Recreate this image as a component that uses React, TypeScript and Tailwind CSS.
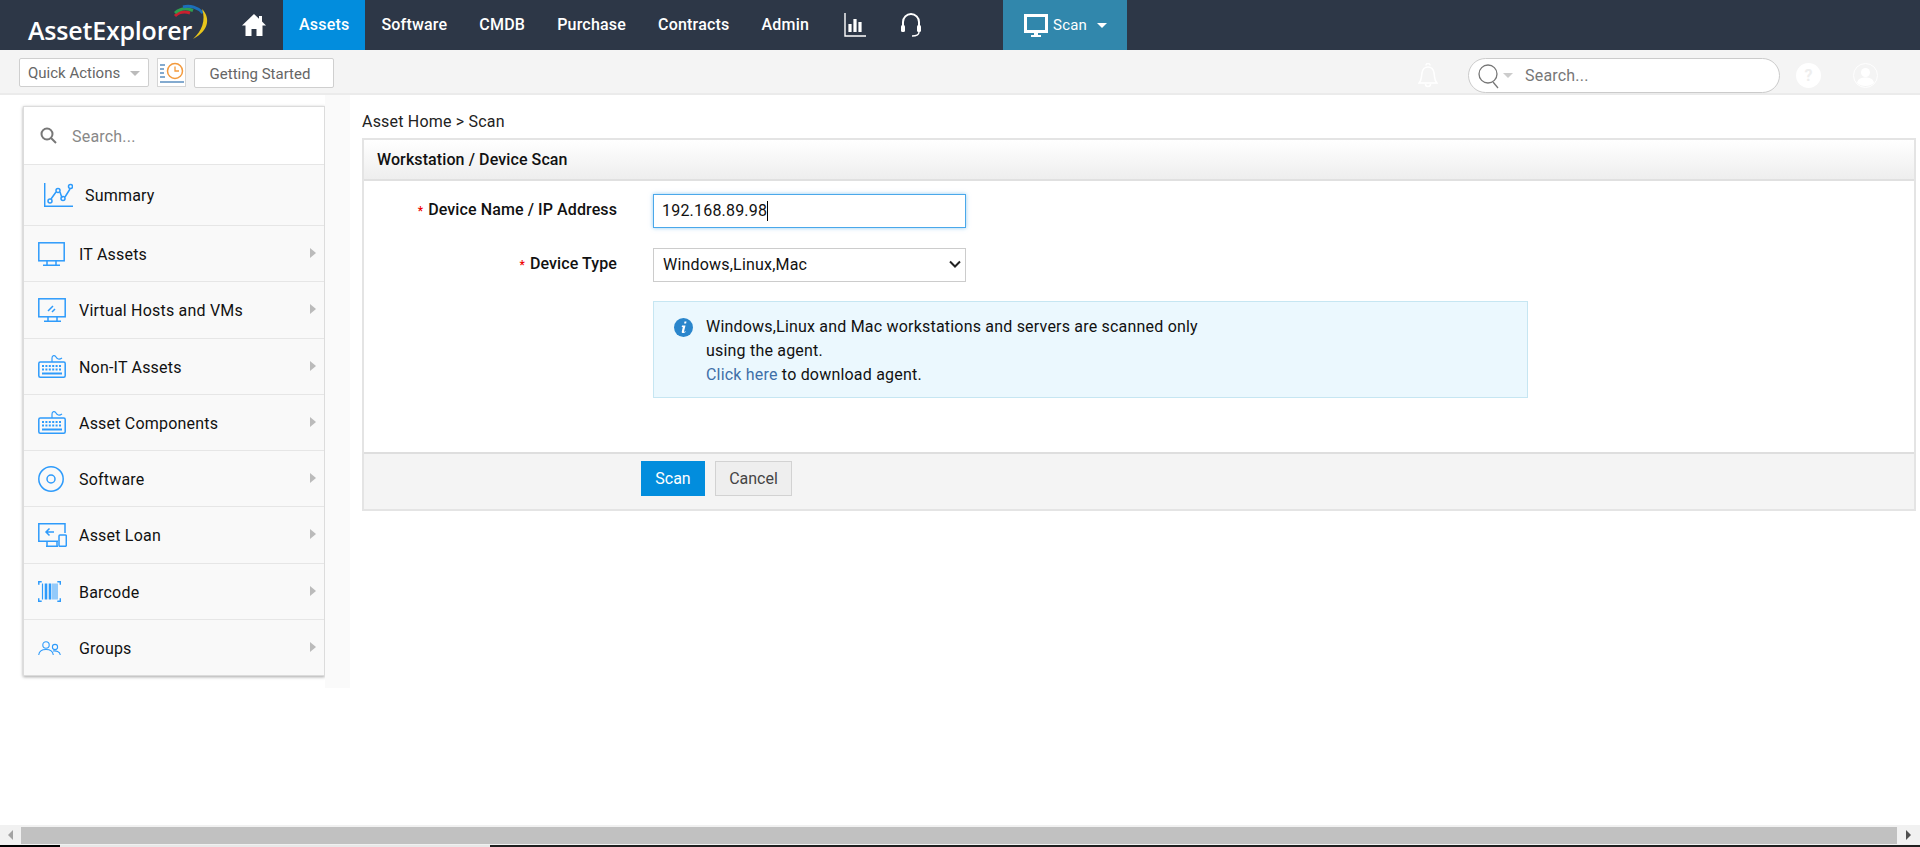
import type { ReactNode } from "react";

const blue = "#2e9bfb";

function Svg({ w, h, sw = "1.500", children }: { w: number; h: number; sw?: string; children: ReactNode }) {
  return (
    <svg width={w} height={h} viewBox={`0 0 ${w} ${h}`} fill="none" stroke={blue} strokeWidth={sw}>
      {children}
    </svg>
  );
}

const SummaryIcon = () => (
  <Svg w={29} h={24}>
    <path d="M.7 0v23.3H29" />
    <path d="M7 16l5-7M16 9l2 6M21 14l5-8" />
    <circle cx="6" cy="18" r="2" />
    <circle cx="14" cy="7.5" r="2" />
    <circle cx="19" cy="15.5" r="2" />
    <circle cx="26.5" cy="3.5" r="2" />
  </Svg>
);

const MonitorIcon = () => (
  <Svg w={27} h={24}>
    <rect x=".8" y=".8" width="25.4" height="18" />
    <path d="M9 18.7v4M18 18.7v4M5 23.2h17" />
  </Svg>
);

const VirtualIcon = () => (
  <Svg w={28} h={24}>
    <rect x=".8" y=".8" width="26.4" height="18" />
    <path d="M10 18.7v4M19 18.7v4M6 23.2h17M10 13l5-5M14 14l3-3" />
  </Svg>
);

const KeyboardIcon = () => (
  <Svg w={28} h={23}>
    <path d="M14 7V3c0-3 3-3 4-1s3 3 6 1" strokeWidth="1.200" />
    <rect x=".8" y="7" width="26.4" height="15.2" rx="1.500" />
    <path d="M4 11h20M4 14.500h20" strokeWidth="2" strokeDasharray="2 1.400" />
    <path d="M4 18.500h20" strokeWidth="2" />
  </Svg>
);

const DiscIcon = () => (
  <Svg w={26} h={26}>
    <circle cx="13" cy="13" r="12.200" />
    <circle cx="13" cy="13" r="4" />
  </Svg>
);

const LoanIcon = () => (
  <Svg w={29} h={24}>
    <path d="M27 10V.8H.8v17.500H20" />
    <path d="M9 18.300v5M19 18.300v5M8 23.300h12" />
    <rect x="21" y="12" width="7.300" height="11.300" rx="1" />
    <path d="M16 9H8M11.500 5.500L8 9l3.500 3.500" />
  </Svg>
);

const BarcodeIcon = () => (
  <Svg w={23} h={21}>
    <path d="M3.700.8H.8v3M19.300.8h3v3M3.700 20.200h-3v-3M19.300 20.200h3v-3" />
    <path d="M4.500 2.500v16" strokeWidth="1.200" />
    <path d="M8 2.500v16M12 2.500v16" strokeWidth="2.600" />
    <path d="M15 2.500v16M17 2.500v16M19 2.500v16" strokeWidth="1" />
  </Svg>
);

const GroupsIcon = () => (
  <Svg w={23} h={15} sw="1.100">
    <circle cx="8" cy="4" r="3.200" />
    <circle cx="17" cy="6" r="2.600" />
    <path d="M.7 14c.5-4 3.500-5.500 7.300-5.500s6.800 1.500 7.300 5.500M15 10c3-.5 7 .5 7.300 4" />
  </Svg>
);

const menu = [
  { label: "IT Assets", icon: <MonitorIcon />, h: "h-[56px]" },
  { label: "Virtual Hosts and VMs", icon: <VirtualIcon />, h: "h-[57px]" },
  { label: "Non-IT Assets", icon: <KeyboardIcon />, h: "h-[56px]" },
  { label: "Asset Components", icon: <KeyboardIcon />, h: "h-[56px]" },
  { label: "Software", icon: <DiscIcon />, h: "h-[56px]" },
  { label: "Asset Loan", icon: <LoanIcon />, h: "h-[57px]" },
  { label: "Barcode", icon: <BarcodeIcon />, h: "h-[56px]" },
  { label: "Groups", icon: <GroupsIcon />, h: "h-[56px]" },
];

const navLinks = ["Software", "CMDB", "Purchase", "Contracts", "Admin"];

function Logo() {
  return (
    <div className="relative w-[228px] h-[50px] pl-[28px] pt-[14px] shrink-0">
      <span className="font-['Open_Sans',sans-serif] font-semibold text-[25px] leading-[32px] text-white tracking-[-0.2px]">
        AssetExplorer
      </span>
      <svg className="absolute left-[170px] top-[4px]" width="40" height="38" viewBox="0 0 40 38" fill="none" strokeWidth="3">
        <path d="M5 12C9 8 15 7.500 20 9" stroke="#c8202f" />
        <path d="M5 9C10 4.500 17 4 23 6.500" stroke="#2f9e4f" />
        <path d="M13 3C20 1 28 3.500 33 9" stroke="#1c6fb8" />
        <path d="M32 5C40 13 40 26 23 35C32 27 36 16 32 5z" fill="#e8c51c" stroke="none" />
      </svg>
    </div>
  );
}

function TopNav() {
  return (
    <header className="h-[50px] bg-[#2d3747] flex items-stretch shrink-0 text-white font-medium text-[16px] tracking-[0.2px]">
      <Logo />
      <div className="w-[55px] flex items-center justify-start pl-[14px]">
        <svg width="24" height="22" viewBox="0 0 24 22" fill="#fff">
          <path d="M12 0L0 11.500h3.500V22h6v-7h5v7h6V11.500H24l-4-3.900V2h-3v2.700z" />
        </svg>
      </div>
      <a className="px-4 bg-[#028ddd] flex items-center">Assets</a>
      {navLinks.map((l) => (
        <a key={l} className="px-4 flex items-center">{l}</a>
      ))}
      <div className="ml-[19px] w-[56px] flex items-center">
        <svg width="22" height="24" viewBox="0 0 22 24" fill="none" stroke="#fff">
          <path d="M1 0v23h21" strokeWidth="1.400" />
          <path d="M6 11v8M11 6v13M16 9v10" strokeWidth="3.200" />
        </svg>
      </div>
      <div className="w-[103px] flex items-center">
        <svg width="22" height="26" viewBox="0 0 22 26" fill="none" stroke="#fff">
          <path d="M3 14V10a8 8 0 0116 0v4" strokeWidth="2" />
          <rect x="1" y="13" width="4" height="7" rx="1.500" fill="#fff" stroke="none" />
          <rect x="17" y="13" width="4" height="7" rx="1.500" fill="#fff" stroke="none" />
          <path d="M19 20c0 3-3 4-7 4" strokeWidth="1.400" />
        </svg>
      </div>
      <div className="w-[124px] bg-[#3187ac] flex items-center pl-[21px]">
        <svg width="24" height="23" viewBox="0 0 24 23" fill="#fff">
          <path d="M0 0h24v19H14v2h3v2H7v-2h3v-2H0zm3 3v13h18V3z" fillRule="evenodd" />
        </svg>
        <span className="ml-[5px] text-[15px] font-normal tracking-[0.2px]">Scan</span>
        <span className="ml-[10px] border-x-[5px] border-t-[5px] border-x-transparent border-t-white" />
      </div>
    </header>
  );
}

function Toolbar() {
  return (
    <div className="h-[45px] bg-[#f4f4f4] border-b-2 border-[#ebebeb] flex items-start pt-2 shrink-0 text-[15px] text-[#666]">
      <button className="ml-[19px] w-[130px] h-[29px] bg-white border border-[#cfcfcf] rounded-[2px] flex items-center pl-2 pt-[2px]">
        Quick Actions
        <span className="ml-[10px] border-x-[5px] border-t-[5px] border-x-transparent border-t-[#bbb]" />
      </button>
      <div className="ml-2 w-[29px] h-[29px] bg-white border border-[#d5d5d5] flex items-center justify-center">
        <svg width="24" height="22" viewBox="0 0 24 22" fill="none">
          <circle cx="15" cy="9" r="7.500" stroke="#f39a3d" strokeWidth="1.500" />
          <path d="M15 4.500V9h4" stroke="#f39a3d" strokeWidth="1.300" />
          <path d="M0 3h5M0 7h4M0 11h4M0 15h5M0 20h24" stroke="#5b8fc0" strokeWidth="1.300" />
        </svg>
      </div>
      <button className="ml-2 w-[140px] h-[30px] bg-white border border-[#cfcfcf] rounded-[2px] pr-2 pt-[2px]">Getting Started</button>
      <div className="ml-auto mt-[5px] flex items-center">
        <svg width="20" height="25" viewBox="0 0 20 25" fill="none" stroke="#fff" strokeWidth="1.500">
          <path d="M1 20c3-3 2-5 3-10 .6-4 3-6 6-6s5.400 2 6 6c1 5 0 7 3 10zM8 2.500a2 2 0 014 0M7.500 21a2.500 2.500 0 005 0" />
        </svg>
      </div>
      <div className="ml-[30px] w-[312px] h-[35px] bg-white border border-[#cbcbcb] rounded-full flex items-center pl-[9px] text-[#777]">
        <svg width="22" height="26" viewBox="0 0 22 26" fill="none" stroke="#777" strokeWidth="1.300">
          <circle cx="10" cy="11" r="9" />
          <path d="M15 19l5 6" />
        </svg>
        <span className="ml-[3px] border-x-[5px] border-t-[5px] border-x-transparent border-t-[#ccc]" />
        <span className="ml-[12px] text-[16px] tracking-[0.2px]">Search...</span>
      </div>
      <div className="ml-4 mt-[5px] w-[25px] h-[25px] rounded-full bg-white flex items-center justify-center text-[#eee] font-bold text-[16px]">?</div>
      <div className="ml-8 mr-[42px] mt-[5px] w-[25px] h-[25px] rounded-full border border-white flex items-center justify-center">
        <svg width="21" height="21" viewBox="0 0 21 21" fill="#fff">
          <circle cx="10.500" cy="7.500" r="4.500" />
          <path d="M2 18c1-5 5-5.500 8.500-5.500S18 13 19 18c-2 2-5 3-8.500 3S4 20 2 18z" />
        </svg>
      </div>
    </div>
  );
}

function Sidebar() {
  return (
    <aside className="w-[350px] h-[593px] shrink-0 pl-[23px] flex">
      <nav className="w-[302px] h-[570px] mt-[11px] border border-[#dcdcdc] bg-[#f9f9f9] shadow-[0_1px_3px_rgba(0,0,0,0.35)] flex flex-col tracking-[0.2px]">
        <div className="h-[58px] bg-white border-b border-[#e6e6e6] flex items-center pl-4 text-[#777] shrink-0">
          <svg width="17" height="17" viewBox="0 0 17 17" fill="none" stroke="#777" strokeWidth="2">
            <circle cx="7" cy="7" r="5.500" />
            <path d="M11 11l5 5" />
          </svg>
          <span className="ml-[15px] pt-[2px] text-[16px] text-[#888]">Search...</span>
        </div>
        <a className="h-[61px] border-b border-[#e6e6e6] flex items-center pl-5 shrink-0">
          <SummaryIcon />
          <span className="ml-3 pt-[2px] text-[16px] text-[#111]">Summary</span>
        </a>
        {menu.map((m, i) => (
          <a key={m.label} className={`${m.h} ${i < menu.length - 1 ? "border-b border-[#e6e6e6]" : ""} flex items-center shrink-0 pl-[14px] pr-2`}>
            <span className="w-[41px] flex justify-start">{m.icon}</span>
            <span className="pt-[2px] text-[16px] text-[#111]">{m.label}</span>
            <span className="ml-auto -mt-[2px] border-y-[5px] border-l-[6px] border-y-transparent border-l-[#bbb]" />
          </a>
        ))}
      </nav>
      <div className="ml-auto w-[25px] bg-[#fafafa]" />
    </aside>
  );
}

function ScanForm() {
  return (
    <section className="mr-[4px] border-2 border-[#e4e4e4]">
      <div className="h-[41px] bg-gradient-to-b from-white to-[#eeeeee] border-b-2 border-[#e0e0e0] flex items-center pl-[13px] font-medium text-[16px] tracking-[0.1px] text-[#111]">
        Workstation / Device Scan
      </div>
      <div className="h-[271px] bg-white pt-[13px] text-[16px] text-[#111]">
        <div className="flex items-start">
          <label className="w-[253px] h-[34px] text-right font-medium tracking-[0.1px] pt-[4px]">
            <span className="text-[#e00] mr-[5px] text-[12px]">*</span>Device Name / IP Address
          </label>
          <div className="ml-[36px] w-[313px] h-[34px] border border-[#4aa8ea] shadow-[0_0_4px_rgba(74,168,234,0.6)] flex items-center pl-2 tracking-[0.2px]">
            192.168.89.98
            <span className="w-px h-[20px] bg-black" />
          </div>
        </div>
        <div className="flex items-start mt-5">
          <label className="w-[253px] h-[34px] text-right font-medium tracking-[0.1px] pt-[4px]">
            <span className="text-[#e00] mr-[5px] text-[12px]">*</span>Device Type
          </label>
          <div className="relative ml-[36px] w-[313px] h-[34px]">
            <select defaultValue="all" className="w-full h-full appearance-none border border-[#ccc] bg-white pl-[9px] tracking-[0.2px]">
              <option value="all">Windows,Linux,Mac</option>
            </select>
            <svg className="absolute right-[5px] top-[12px] pointer-events-none" width="12" height="9" viewBox="0 0 12 9" fill="none" stroke="#222" strokeWidth="2">
              <path d="M1 1.500l5 5 5-5" />
            </svg>
          </div>
        </div>
        <div className="ml-[289px] mt-[19px] w-[875px] h-[97px] bg-[#ebf8fe] border border-[#c6e6f2] flex pl-5 pt-[15px] tracking-[0.2px]">
          <svg className="mt-px shrink-0" width="19" height="19" viewBox="0 0 19 19">
            <circle cx="9.500" cy="9.500" r="9.500" fill="#2a86cc" />
            <path d="M10.500 3.500h2l-.4 2h-2zM8 7.500h3.500L10 13.500c0 .5.500.5 1.500-.3l.3.500c-1.500 1.500-4.500 2-4-.3l1-4.500H7.700z" fill="#fff" />
          </svg>
          <p className="ml-[13px] leading-[24px] -mt-[2px]">
            Windows,Linux and Mac workstations and servers are scanned only
            <br />
            using the agent.
            <br />
            <a className="text-[#3f6fa8]">Click here</a> to download agent.
          </p>
        </div>
      </div>
      <div className="h-[57px] bg-[#f4f4f4] border-t-2 border-[#dedede] flex items-start pt-[7px] pl-[277px] text-[16px]">
        <button className="w-[64px] h-[35px] bg-[#028ddd] text-white">Scan</button>
        <button className="ml-[10px] w-[77px] h-[35px] bg-[#eeeeee] border border-[#d2d2d2] text-[#444]">Cancel</button>
      </div>
    </section>
  );
}

function Scrollbar() {
  return (
    <div className="shrink-0">
      <div className="h-5 bg-[#f1f1f1] flex items-center">
        <div className="w-[21px] flex justify-center">
          <span className="border-y-[5px] border-r-[5px] border-y-transparent border-r-[#a3a3a3]" />
        </div>
        <div className="flex-1 h-[17px] bg-[#c1c1c1]" />
        <div className="w-[23px] flex justify-center">
          <span className="border-y-[5px] border-l-[5px] border-y-transparent border-l-[#505050]" />
        </div>
      </div>
      <div className="h-[2px] flex bg-[#1f1f1f]">
        <div className="w-[60px] bg-black" />
        <div className="w-[430px] bg-[#e8e8e8]" />
      </div>
    </div>
  );
}

export default function App() {
  return (
    <div className="h-[847px] w-[1920px] overflow-hidden flex flex-col bg-white font-['Roboto',sans-serif]">
      <TopNav />
      <Toolbar />
      <div className="flex-1 flex min-h-0">
        <Sidebar />
        <main className="flex-1 pl-[12px] min-w-0">
          <div className="h-[43px] pt-[17px] text-[16px] leading-[20px] tracking-[0.2px] text-[#222]">Asset Home &gt; Scan</div>
          <ScanForm />
        </main>
      </div>
      <Scrollbar />
    </div>
  );
}
